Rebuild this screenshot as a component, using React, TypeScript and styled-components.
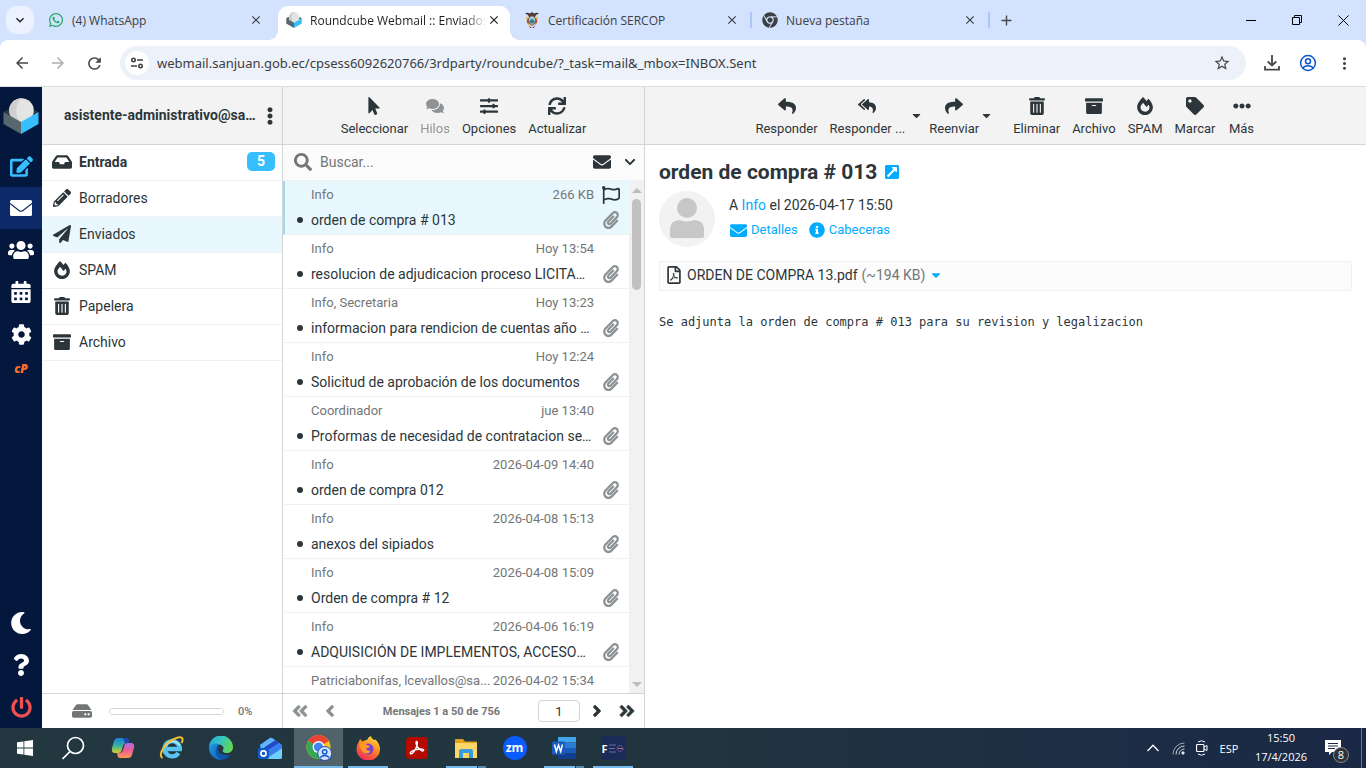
import React from 'react';
import styled, { createGlobalStyle, css } from 'styled-components';
import {
  FaInbox, FaPencilAlt, FaPaperPlane, FaFireAlt, FaTrashAlt, FaArchive, FaMousePointer, FaComments,
  FaSlidersH, FaSync, FaReply, FaReplyAll, FaShare, FaEllipsisH, FaEllipsisV, FaTag, FaRegFlag,
  FaPaperclip, FaEnvelope, FaChevronDown, FaSearch, FaHdd, FaAngleDoubleLeft, FaAngleDoubleRight,
  FaAngleLeft, FaAngleRight, FaExternalLinkSquareAlt, FaInfoCircle, FaRegFilePdf, FaEdit, FaUsers,
  FaCalendarAlt, FaCog, FaMoon, FaQuestion, FaPowerOff, FaWhatsapp, FaChrome, FaCaretDown,
} from 'react-icons/fa';
import {
  MdArrowBack, MdArrowForward, MdRefresh, MdStarBorder, MdMoreVert, MdClose, MdAdd, MdKeyboardArrowDown,
} from 'react-icons/md';

const ink = '#2c363a';
const muted = '#737677';
const link = '#00acff';
const line = '#d0d5d8';

const GlobalStyle = createGlobalStyle`
  * { box-sizing: border-box; }
  body { margin: 0; background: #fff; color: ${ink}; font-family: Roboto, sans-serif; font-size: 14px; }
  button, input { font: inherit; color: inherit; }
  button { border: 0; padding: 0; background: none; cursor: pointer; }
  a { color: inherit; text-decoration: none; }
  ul { list-style: none; margin: 0; padding: 0; }
  h1, p { margin: 0; }
  svg { display: block; flex: none; }
`;

const Screen = styled.div`
  display: flex;
  flex-direction: column;
  height: 100vh;
  overflow: hidden;
`;

/* ---------- Browser chrome ---------- */

const TabStrip = styled.header`
  display: flex;
  align-items: center;
  height: 40px;
  flex: none;
  padding-left: 6px;
  background: #d3e2fd;
  font-family: "Open Sans", sans-serif;
  font-size: 12px;
  color: #3c4043;
`;

const TabSearch = styled.button`
  display: grid;
  place-items: center;
  width: 28px;
  height: 28px;
  margin-right: 6px;
  border-radius: 10px;
  background: #ebf1fe;
  color: #1f1f1f;
`;

const Tab = styled.div<{ $active?: boolean; $divider?: boolean }>`
  position: relative;
  display: flex;
  align-items: center;
  width: 238px;
  height: 40px;
  padding: 0 15px 0 8px;
  ${p => p.$divider && css`
    &::after {
      content: "";
      position: absolute;
      right: 2px;
      top: 12px;
      width: 2px;
      height: 16px;
      background: #a8c7fa;
    }
  `}
  ${p => p.$active && css`
    height: 34px;
    align-self: flex-end;
    padding-bottom: 6px;
    background: #fff;
    border-radius: 10px 10px 0 0;
    color: #1f1f1f;
    width: 232px;
    padding-right: 9px;
    margin-right: 6px;
    &::before, &::after {
      content: "";
      position: absolute;
      bottom: 0;
      width: 10px;
      height: 10px;
    }
    &::before { left: -10px; background: radial-gradient(circle at 0 0, transparent 10px, #fff 10px); }
    &::after { right: -10px; background: radial-gradient(circle at 100% 0, transparent 10px, #fff 10px); }
  `}
`;

const TabTitle = styled.button<{ $fade?: boolean }>`
  display: flex;
  align-items: center;
  gap: 8px;
  flex: 1;
  min-width: 0;
  overflow: hidden;
  white-space: nowrap;
  text-align: left;
  ${p => p.$fade && css`mask-image: linear-gradient(to right, #000 180px, transparent 200px);`}
`;

const IconButton = styled.button<{ $w?: number; $color?: string }>`
  display: grid;
  place-items: center;
  width: ${p => p.$w ?? 36}px;
  height: 34px;
  flex: none;
  color: ${p => p.$color ?? '#474747'};
`;

const WindowControls = styled.div`
  display: flex;
  margin-left: auto;
  color: #000;
`;

const AddressRow = styled.div`
  background: #d3e2fd;
  flex: none;
`;

const AddressBar = styled.div`
  display: flex;
  align-items: center;
  height: 47px;
  padding: 0 4px;
  border-bottom: 1px solid #dcdcdc;
  border-radius: 8px 8px 0 0;
  background: #fff;
`;

const Omnibox = styled.div`
  display: flex;
  align-items: center;
  flex: 1;
  height: 34px;
  margin: 0 8px;
  padding: 0 6px 0 5px;
  border-radius: 17px;
  background: #ecf1fa;
`;

const SiteInfo = styled.button`
  display: grid;
  place-items: center;
  width: 24px;
  height: 24px;
  border-radius: 12px;
  background: #fff;
`;

const UrlInput = styled.input`
  flex: 1;
  min-width: 0;
  padding: 0 8px;
  border: 0;
  outline: 0;
  background: none;
  font-family: "Noto Sans", sans-serif;
  font-size: 13px;
  color: #3a3d41;
`;

/* ---------- Webmail shell ---------- */

const Webmail = styled.div`
  display: flex;
  flex: 1;
  min-height: 0;
`;

const TaskMenu = styled.nav`
  display: flex;
  flex-direction: column;
  width: 42px;
  flex: none;
  background: #04173d;
  color: #fff;
`;

const LogoBox = styled.div`
  display: grid;
  place-items: center;
  height: 58px;
`;

const TaskLink = styled.a<{ $active?: boolean; $color?: string; $push?: boolean }>`
  display: grid;
  place-items: center;
  height: 42px;
  margin-top: ${p => (p.$push ? 'auto' : 0)};
  background: ${p => (p.$active ? '#0f2a68' : 'transparent')};
  color: ${p => p.$color ?? '#fff'};
`;

const PanelLink = styled.a`
  color: #ff6c2c;
  font-family: "Open Sans", sans-serif;
  font-size: 12px;
  font-style: italic;
  font-weight: 800;
  line-height: 28px;
  text-align: center;
`;

const Column = styled.section<{ $w?: number }>`
  display: flex;
  flex-direction: column;
  min-width: 0;
  ${p => (p.$w ? css`width: ${p.$w}px; flex: none; border-right: 1px solid ${line};` : css`flex: 1;`)}
`;

const ColumnHeader = styled.div`
  display: flex;
  align-items: center;
  justify-content: center;
  height: 58px;
  flex: none;
  background: #f3f3f3;
  border-bottom: 1px solid ${line};
`;

const ColumnFooter = styled.footer`
  display: flex;
  align-items: center;
  height: 35px;
  flex: none;
  margin-top: auto;
  padding: 0 2px;
  border-top: 1px solid ${line};
  color: ${muted};
  font-size: 11px;
  font-weight: 500;
`;

const Account = styled.span`
  flex: 1;
  min-width: 0;
  padding: 0 0 2px 22px;
  overflow: hidden;
  white-space: nowrap;
  text-overflow: ellipsis;
  font-weight: 700;
`;

const AccountMenu = styled.button`
  width: 24px;
  display: grid;
  place-items: center;
`;

const Folder = styled.a<{ $selected?: boolean; $unread?: boolean }>`
  display: flex;
  align-items: center;
  gap: 7px;
  height: 36px;
  padding: 0 7px 2px 10px;
  border-bottom: 1px solid #eff2f3;
  background: ${p => (p.$selected ? '#e9f7fe' : '#fff')};
  font-weight: ${p => (p.$unread ? 700 : 400)};
`;

const FolderIcon = styled.span`
  display: grid;
  place-items: center;
  width: 20px;
`;

const Unread = styled.span`
  margin-left: auto;
  width: 28px;
  border-radius: 5px;
  background: #37beff;
  color: #fff;
  line-height: 19px;
  text-align: center;
`;

const QuotaBar = styled.progress`
  appearance: none;
  width: 115px;
  height: 7px;
  margin: 0 14px 0 17px;
  border: 1px solid ${line};
  border-radius: 4px;
  overflow: hidden;
  &::-webkit-progress-bar { background: #fff; }
`;

const QuotaIcon = styled.span`
  margin-left: 28px;
`;

/* ---------- Toolbars ---------- */

const ToolItem = styled.button<{ $disabled?: boolean }>`
  display: flex;
  flex-direction: column;
  align-items: center;
  gap: 4px;
  min-width: 40px;
  padding: 4px 6px 0;
  font-size: 13px;
  line-height: 20px;
  opacity: ${p => (p.$disabled ? 0.5 : 1)};
`;

const ToolCaret = styled.button<{ $tight?: boolean }>`
  display: grid;
  place-items: center;
  width: 14px;
  height: 44px;
  margin-right: ${p => (p.$tight ? 0 : 14)}px;
  margin-left: ${p => (p.$tight ? -2 : -6)}px;
`;

/* ---------- Message list ---------- */

const SearchBar = styled.div`
  display: flex;
  align-items: center;
  height: 36px;
  flex: none;
  padding: 0 0 2px 11px;
  background: #fbfbfb;
  border-bottom: 1px solid #eff2f3;
`;

const SearchInput = styled.input`
  flex: 1;
  min-width: 0;
  padding: 0 8px;
  border: 0;
  outline: 0;
  background: none;
  &::placeholder { color: ${muted}; opacity: 1; }
`;

const ListArea = styled.div`
  display: flex;
  flex: 1;
  min-height: 0;
`;

const MessageList = styled.ul`
  flex: 1;
  min-width: 0;
  overflow: hidden;
`;

const Message = styled.li<{ $selected?: boolean }>`
  display: flex;
  height: 54px;
  padding-right: 8px;
  border-left: 2px solid ${p => (p.$selected ? '#a5d8ef' : 'transparent')};
  border-bottom: 1px solid #eff2f3;
  background: ${p => (p.$selected ? '#e9f7fe' : '#fff')};
`;

const MessageLink = styled.a`
  display: grid;
  grid-template-columns: 26px 1fr auto;
  grid-template-rows: 26px 26px;
  align-items: center;
  flex: 1;
  min-width: 0;
`;

const Sender = styled.span`
  grid-column: 2;
  overflow: hidden;
  white-space: nowrap;
  text-overflow: ellipsis;
  font-size: 13px;
  color: ${muted};
`;

const Stamp = styled.span`
  font-size: 13px;
  color: ${muted};
`;

const Bullet = styled.span`
  justify-self: end;
  width: 6px;
  height: 6px;
  margin-right: 8px;
  border-radius: 3px;
  background: ${ink};
`;

const Subject = styled.span`
  grid-column: 2 / 4;
  overflow: hidden;
  white-space: nowrap;
  text-overflow: ellipsis;
`;

const Marks = styled.span`
  display: grid;
  grid-template-rows: 28px 21px;
  place-items: center;
  width: 20px;
  margin-left: 7px;
`;

const ScrollTrack = styled.div`
  display: flex;
  flex-direction: column;
  align-items: center;
  width: 15px;
  flex: none;
  background: #f1f1f1;
`;

const ScrollArrow = styled.span<{ $down?: boolean }>`
  margin: ${p => (p.$down ? 'auto 0 6px' : '7px 0 6px')};
  border: 5px solid transparent;
  border-${p => (p.$down ? 'top' : 'bottom')}-color: #bcbcbc;
  border-${p => (p.$down ? 'bottom' : 'top')}-width: 0;
`;

const ScrollThumb = styled.span`
  width: 9px;
  height: 91px;
  border-radius: 5px;
  background: #c1c1c1;
`;

const PagerButton = styled.button<{ $dim?: boolean }>`
  display: grid;
  place-items: center;
  width: 30px;
  color: ${p => (p.$dim ? '#8c9294' : ink)};

  svg path {
    stroke: currentColor;
    stroke-width: 20px;
  }
`;

const PagerText = styled.span`
  flex: 1;
  text-align: center;
  font-weight: 700;
`;

const PageInput = styled.input`
  width: 42px;
  height: 22px;
  padding: 0;
  margin-right: 2px;
  border: 1px solid #ced4da;
  border-radius: 4px;
  background: #fff;
  color: ${ink};
  text-align: center;
  font-size: 13px;
  font-weight: 400;
`;

/* ---------- Message view ---------- */

const MessageView = styled.article`
  padding: 14px;
`;

const Title = styled.h1`
  display: flex;
  align-items: center;
  gap: 7px;
  font-size: 21px;
  line-height: 26px;
  font-weight: 700;
`;

const Summary = styled.div`
  display: flex;
  gap: 14px;
  margin-top: 6px;
`;

const SummaryText = styled.div`
  padding-top: 4px;
  line-height: 20px;
`;

const Links = styled.div`
  display: flex;
  gap: 11px;
  margin-top: 5px;
  padding-left: 1px;
  font-size: 13px;
`;

const HeaderLink = styled.a`
  display: flex;
  align-items: center;
  gap: 4px;
  color: ${link};
`;

const Accent = styled.a`
  color: ${link};
`;

const Attachment = styled.div`
  display: flex;
  align-items: center;
  height: 30px;
  margin-top: 14px;
  padding: 0 5px 2px;
  border: 1px solid #f1f1f1;
  background: #fcfcfc;
`;

const AttachmentName = styled.a`
  padding: 0 4px;
`;

const Muted = styled.span`
  color: ${muted};
  margin-right: 4px;
`;

const MailBody = styled.p`
  margin-top: 23px;
  font-family: "DejaVu Sans Mono", monospace;
  font-size: 12px;
  line-height: 16px;
`;

/* ---------- Taskbar ---------- */

const Taskbar = styled.footer`
  display: flex;
  align-items: stretch;
  height: 40px;
  flex: none;
  background: linear-gradient(to right, #22373f 0%, #21353f 50%, #1c2c45 85%, #1a2845 100%);
  color: #fff;
  font-family: "Open Sans", sans-serif;
  font-size: 11px;
`;

const AppButton = styled.button<{ $active?: boolean; $bar?: 'full' | 'one' | 'stack' }>`
  display: grid;
  place-items: center;
  width: 49px;
  background-color: ${p => (p.$active ? '#50626a' : 'transparent')};
  background-repeat: no-repeat;
  background-position: center bottom;
  ${p => p.$bar === 'full' && css`
    background-image: linear-gradient(#76b9ed, #76b9ed);
    background-size: 100% 2px;
  `}
  ${p => p.$bar === 'one' && css`
    background-image: linear-gradient(#76b9ed, #76b9ed);
    background-size: 40px 2px;
  `}
  ${p => p.$bar === 'stack' && css`
    background-image: linear-gradient(to right, #76b9ed 31px, #22373f 31px, #22373f 32px, #5489ad 32px);
    background-size: 40px 2px;
  `}
`;

const Tray = styled.div`
  display: flex;
  align-items: center;
  margin-left: auto;
  padding-right: 4px;
`;

const TrayButton = styled.button<{ $w: number }>`
  display: grid;
  place-items: center;
  width: ${p => p.$w}px;
  height: 40px;
`;

const Clock = styled.time`
  width: 74px;
  padding-bottom: 2px;
  text-align: center;
  line-height: 19px;
`;

const Notice = styled.button`
  position: relative;
  display: grid;
  place-items: center;
  width: 44px;
  height: 40px;
  padding-right: 14px;
  border-right: 1px solid #6b7689;
`;

const NoticeCount = styled.span`
  position: absolute;
  right: 12px;
  bottom: 5px;
  width: 16px;
  height: 16px;
  border: 1px solid #8a8a8a;
  border-radius: 8px;
  background: #303236;
  line-height: 14px;
`;

/* ---------- Drawings ---------- */

const CubeLogo = ({ size }: { size: number }) => (
  <svg width={size} height={size} viewBox="0 0 36 36" aria-hidden="true">
    <path d="M0.500 14 18 5l17.500 9L18 24z" fill="#2c3a3f" />
    <circle cx="18.500" cy="12.500" r="12.300" fill="#e4e4e4" />
    <path d="M18.500 0.200a12.300 12.300 0 0 0 0 24.600c-7-5-7-19 0-24.600z" fill="#cfcfcf" />
    <path d="M0.500 14 18 24v12L0.500 26z" fill="#56686d" />
    <path d="M35.500 14 18 24v12l17.500-10z" fill="#37beff" />
  </svg>
);

const MailNav = () => (
  <svg width="22" height="16" viewBox="0 0 22 16" fill="none" aria-hidden="true">
    <rect width="22" height="16" rx="1.500" fill="#fff" />
    <path d="M0 3.500 9 10.500q2 1.500 4 0l9-7" stroke="#0f2a68" strokeWidth="1.100" />
  </svg>
);

const Crest = () => (
  <svg width="16" height="18" viewBox="0 0 16 18" aria-hidden="true">
    <path d="M1 2.500Q3 1 6 2.500L8 1l2 1.500Q13 1 15 2.500L12 4l-1 2H5L4 4z" fill="#4d3a30" />
    <path d="M2 6h2.500L5 15 3 12.500zM14 6h-2.500L11 15l2-2.500z" fill="#e3b93a" />
    <path d="M3 8l1.500 1v4.500L3 11zM13 8l-1.500 1v4.500L13 11z" fill="#c0443c" />
    <ellipse cx="8" cy="9.500" rx="3.600" ry="4.600" fill="#9fd3ea" stroke="#8a4a30" />
    <path d="M5 10.500 8 7.500l3 3-1 2H6z" fill="#3f7d8c" />
    <path d="M5 14.500 8 17l3-2.500-1 2.500H6z" fill="#aa3a35" />
  </svg>
);

const SiteSettings = () => (
  <svg width="14" height="14" viewBox="0 0 14 14" fill="none" stroke="#3c4043" strokeWidth="1.600" aria-hidden="true">
    <circle cx="3.500" cy="4" r="1.700" />
    <path d="M7 4h6M1 10h6" />
    <circle cx="10.500" cy="10" r="1.700" />
  </svg>
);

const DownloadTray = () => (
  <svg width="16" height="16" viewBox="0 0 16 16" fill="none" stroke="currentColor" strokeWidth="1.800" aria-hidden="true">
    <path d="M8 0v10M3.700 6.500 8 10.500l4.300-4M1 11v3.600h14V11" />
  </svg>
);

const Profile = () => (
  <svg width="18" height="18" viewBox="0 0 18 18" fill="none" stroke="#0b57d0" strokeWidth="1.500" aria-hidden="true">
    <circle cx="9" cy="9" r="7.400" />
    <circle cx="9" cy="7.300" r="2.500" />
    <path d="M3.500 13.800q5.500-4 11 0" />
  </svg>
);

const Minimize = () => (
  <svg width="10" height="10" viewBox="0 0 10 10" stroke="#000" aria-hidden="true"><path d="M0 5.500h10" /></svg>
);

const Restore = () => (
  <svg width="10" height="10" viewBox="0 0 10 10" fill="none" stroke="#000" aria-hidden="true">
    <path d="M.5 2.500h7v7h-7zM2.500 2.500v-2h7v7h-2" />
  </svg>
);

const CloseWindow = () => (
  <svg width="11" height="11" viewBox="0 0 11 11" fill="none" stroke="#000" aria-hidden="true">
    <path d="M.5.5l10 10M10.500.5l-10 10" />
  </svg>
);

const Avatar = () => (
  <svg width="56" height="56" viewBox="0 0 56 56" role="img" aria-label="Info">
    <circle cx="28" cy="28" r="28" fill="#f2f2f2" />
    <circle cx="28" cy="17" r="10" fill="#c7c7c7" />
    <path d="M11 45V39q0-10 10-10 7 3 14 0 10 0 10 10v6q0 2-2 2H13q-2 0-2-2z" fill="#c7c7c7" />
  </svg>
);

const WindowsLogo = () => (
  <svg width="16" height="16" viewBox="0 0 16 16" fill="#fff" aria-hidden="true">
    <path d="M0 2.300 6.500 1.400v6.200H0zM7.300 1.300 16 0v7.600H7.300zM0 8.400h6.500v6.200L0 13.700zM7.300 8.400H16V16l-8.700-1.300z" />
  </svg>
);

const SearchGlass = () => (
  <svg width="24" height="24" viewBox="1 0 24 24" fill="none" stroke="#fff" strokeWidth="1.700" aria-hidden="true">
    <circle cx="14.500" cy="9.500" r="8" />
    <path d="M9 15.500 1.500 23" />
  </svg>
);

const Copilot = () => (
  <svg width="24" height="22" viewBox="0 0 24 22" aria-hidden="true">
    <defs>
      <linearGradient id="cpA" x1="0" y1="0" x2="0" y2="1">
        <stop offset="0" stopColor="#1a7fe0" /><stop offset=".5" stopColor="#35b0a0" /><stop offset="1" stopColor="#d9d02c" />
      </linearGradient>
      <linearGradient id="cpB" x1="0" y1="0" x2="0" y2="1">
        <stop offset="0" stopColor="#b06ae8" /><stop offset=".5" stopColor="#ee5d90" /><stop offset="1" stopColor="#fb9a54" />
      </linearGradient>
    </defs>
    <path d="M7 1h8q2 0 2.500 2L18 6h-3q-2 0-3 3l-1.500 5Q10 16 7 16H4q-4 0-3-5l2-7q1-3 4-3z" fill="url(#cpA)" />
    <path d="M12 1h3q2 0 2.500 2L18.500 6H14z" fill="#1c46b8" />
    <path d="M17 21H9q-2 0-2.500-2L6 16h3q2 0 3-3l1.500-5Q14 6 17 6h3q4 0 3 5l-2 7q-1 3-4 3z" fill="url(#cpB)" />
  </svg>
);

const Explorer = () => (
  <svg width="25" height="24" viewBox="0 0 25 24" fill="none" aria-hidden="true">
    <path d="M19.500 17A7.600 7.600 0 1 1 20.800 13H8" stroke="#58c4f2" strokeWidth="4.400" />
    <path d="M7 10.500Q9 5.500 14 5.500q4.500 0 6.500 4" stroke="#b5ebfc" strokeWidth="1.500" />
    <path d="M3.500 22C-2 19 7 5 17 2.200 23-.5 25 2.500 22.500 7" stroke="#f3c12d" strokeWidth="2" />
  </svg>
);

const Edge = () => (
  <svg width="24" height="24" viewBox="0 0 24 24" aria-hidden="true">
    <defs>
      <linearGradient id="edA" x1="0" y1=".2" x2="1" y2=".5">
        <stop offset="0" stopColor="#2aa5e0" /><stop offset=".5" stopColor="#36c6c0" /><stop offset="1" stopColor="#63d84f" />
      </linearGradient>
      <linearGradient id="edB" x1="0" y1="0" x2="1" y2="1">
        <stop offset="0" stopColor="#1b9de2" /><stop offset="1" stopColor="#1259b5" />
      </linearGradient>
    </defs>
    <path d="M0 12A12 12 0 0 1 24 11c0 4-3 6-6 6-3 0-5-1-4-3 1.500-2 0-5-4-5.500C5 8 1 9.500 0 12z" fill="url(#edA)" />
    <path d="M0 12c1-4 6-5.500 10-3.500C6 10 6 20 14 23.800 6 25 0 19 0 12z" fill="url(#edB)" />
    <path d="M10 9c-3 6 2 12 11.500 9.500-2 3-4.500 4.800-7.500 5.300C5 21 5 12 10 9z" fill="#0f55a8" />
  </svg>
);

const Outlook = () => (
  <svg width="24" height="23" viewBox="0 0 24 23" aria-hidden="true">
    <path d="M2 8 12 1q1-.7 2 0l10 7v12q0 2-2 2H5q-3 0-3-3z" fill="#2f8df0" />
    <path d="M2 8l10-7q1-.7 2 0l4 2.800L4 12z" fill="#5fb4fb" />
    <path d="M4 12 17 3.200l4 2.700L8 14.500z" fill="#2447c8" />
    <path d="M8 14.500 21 6l3 2.200v3L10 20z" fill="#3a7df0" />
    <path d="M24 11.200V20q0 2-2 2H8z" fill="#6fd0fc" />
    <rect y="11" width="11" height="11" rx="2" fill="#1359c8" />
    <circle cx="5.500" cy="16.500" r="2.600" fill="none" stroke="#fff" strokeWidth="1.600" />
  </svg>
);

const ChromeApp = () => (
  <svg width="26" height="26" viewBox="0 0 26 26" aria-hidden="true">
    <circle cx="12.500" cy="12" r="12" fill="#fbc116" />
    <path d="M12.500 12 2.100 6A12 12 0 0 1 22.900 6z" fill="#ea4335" />
    <path d="M12.500 12 2.100 6A12 12 0 0 0 12.500 24l5-9z" fill="#34a853" />
    <circle cx="12.500" cy="12" r="6" fill="#fff" />
    <circle cx="12.500" cy="12" r="4.600" fill="#4285f4" />
    <circle cx="18.700" cy="18.500" r="7" fill="#d3e3fd" stroke="#174ea6" />
    <circle cx="18.700" cy="16.800" r="2.200" fill="none" stroke="#0b57d0" strokeWidth="1.400" />
    <path d="M14.200 22.500q4.500-4 9 0" fill="none" stroke="#0b57d0" strokeWidth="1.400" />
  </svg>
);

const Firefox = () => (
  <svg width="24" height="24" viewBox="0 0 24 24" aria-hidden="true">
    <defs>
      <linearGradient id="ffA" x1=".8" y1="0" x2=".3" y2="1">
        <stop offset="0" stopColor="#ffe14a" /><stop offset=".45" stopColor="#ff8a1f" /><stop offset="1" stopColor="#f0265a" />
      </linearGradient>
    </defs>
    <path d="M3 5.500 4 3l2.500 2.500Q9 3.500 11 4q1-3 4-4 0 2.500 3 4l1.500-.5Q24 8 24 13a11.500 11.500 0 0 1-23.500 0Q.5 9 3 5.500z" fill="url(#ffA)" />
    <circle cx="12" cy="13" r="5.500" fill="#7a3fd0" />
    <path d="M4 8q4-2 7 1l3 1q-1 2-4 2.500 1 3 5 2-2 4-7 2.500Q4 14 4 8z" fill="#ff9a2a" />
  </svg>
);

const Acrobat = () => (
  <svg width="22" height="22" viewBox="0 0 22 22" aria-hidden="true">
    <rect width="22" height="22" rx="4" fill="#b30b00" />
    <path d="M4.500 16.500c-1-1.500 2-3 6-4 4-.8 8-.6 7 1-1.300 1.600-5.500-2-6.800-5C9.500 5.500 10 4 11 4.500c1.200.8-.2 5.500-2 8.500-1.600 2.800-3.700 4.600-4.500 3.500z" fill="none" stroke="#fff" strokeWidth="1.400" />
  </svg>
);

const FolderApp = () => (
  <svg width="22" height="19" viewBox="0 0 22 19" aria-hidden="true">
    <path d="M0 1q0-1 1-1h7l2 2.500h12V6H0z" fill="#e0a21c" />
    <path d="M0 4h22v15H0z" fill="#fcd768" />
    <path d="M4 19v-7q0-2 2-2h10q2 0 2 2v7h-4v-5H8v5z" fill="#3a9bdc" />
  </svg>
);

const ZoomBadge = styled.span`
  display: grid;
  place-items: center;
  width: 24px;
  height: 24px;
  border-radius: 12px;
  background: #0b5cff;
  font-size: 12px;
  line-height: 20px;
  font-weight: 700;
`;

const Word = () => (
  <svg width="24" height="22" viewBox="0 0 24 22" aria-hidden="true">
    <rect x="6" width="18" height="5.500" fill="#41a5ee" />
    <rect x="6" y="5.500" width="18" height="5.500" fill="#2b7cd3" />
    <rect x="6" y="11" width="18" height="5.500" fill="#185abd" />
    <rect x="6" y="16.500" width="18" height="5.500" fill="#103f91" />
    <rect y="4.500" width="13" height="13" rx="1" fill="#185abd" />
    <path d="M2.500 7.500 4.300 14.500 6.500 8l2.200 6.500 1.800-7" fill="none" stroke="#fff" strokeWidth="1.500" />
  </svg>
);

const SignBadge = styled.span`
  display: flex;
  align-items: center;
  justify-content: center;
  gap: 1px;
  width: 24px;
  height: 24px;
  background: #1a2b57;
  font-weight: 700;
`;

const SignMark = () => (
  <svg width="15" height="9" viewBox="0 0 15 9" fill="none" aria-hidden="true">
    <path d="M0 1h7M0 4.500h6M0 8h7" stroke="#6a6fae" />
    <circle cx="11" cy="4.500" r="3" stroke="#8a6a9c" strokeDasharray="2 1" />
    <path d="M9 4.500h5" stroke="#b0708c" />
  </svg>
);

const ChevronUp = () => (
  <svg width="12" height="8" viewBox="0 0 12 8" fill="none" stroke="#fff" strokeWidth="1.300" aria-hidden="true">
    <path d="M.5 7 6 1.300 11.500 7" />
  </svg>
);

const Wifi = () => (
  <svg width="13" height="13" viewBox="0 0 13 13" fill="none" stroke="#d5dae2" aria-hidden="true">
    <path d="M1 12.500A11.500 11.500 0 0 1 12.500 1" opacity=".7" />
    <path d="M4 12.500A8.500 8.500 0 0 1 12.500 4M7 12.500A5.500 5.500 0 0 1 12.500 7" />
    <circle cx="11" cy="11" r="1.200" fill="#fff" />
  </svg>
);

const Camera = () => (
  <svg width="12" height="16" viewBox="0 0 12 16" fill="none" stroke="#fff" aria-hidden="true">
    <rect x=".5" y="4.500" width="7.500" height="7" rx="1" strokeWidth="1.200" />
    <path d="M8 7l3-1.500v5L8 9M2 2q3.500-2.500 7 0M2 14q3.500 2.500 7 0" />
  </svg>
);

const NoticeIcon = () => (
  <svg width="16" height="16" viewBox="0 0 16 16" aria-hidden="true">
    <path d="M0 0h16v12H7l-3 3v-3H0z" fill="#fff" />
    <path d="M3 3.500h10M3 6h10M3 8.500h7" stroke="#1b2944" />
  </svg>
);

/* ---------- Data ---------- */

const folders = [
  { name: 'Entrada', Icon: FaInbox, unread: 5 },
  { name: 'Borradores', Icon: FaPencilAlt },
  { name: 'Enviados', Icon: FaPaperPlane, selected: true },
  { name: 'SPAM', Icon: FaFireAlt },
  { name: 'Papelera', Icon: FaTrashAlt },
  { name: 'Archivo', Icon: FaArchive },
];

const messages = [
  { from: 'Info', date: '266 KB', subject: 'orden de compra # 013', selected: true },
  { from: 'Info', date: 'Hoy 13:54', subject: 'resolucion de adjudicacion proceso LICITACION' },
  { from: 'Info, Secretaria', date: 'Hoy 13:23', subject: 'informacion para rendicion de cuentas año 2025' },
  { from: 'Info', date: 'Hoy 12:24', subject: 'Solicitud de aprobación de los documentos' },
  { from: 'Coordinador', date: 'jue 13:40', subject: 'Proformas de necesidad de contratacion servicios' },
  { from: 'Info', date: '2026-04-09 14:40', subject: 'orden de compra 012' },
  { from: 'Info', date: '2026-04-08 15:13', subject: 'anexos del sipiados' },
  { from: 'Info', date: '2026-04-08 15:09', subject: 'Orden de compra # 12' },
  { from: 'Info', date: '2026-04-06 16:19', subject: 'ADQUISICIÓN DE IMPLEMENTOS, ACCESORIOS' },
  { from: 'Patriciabonifas, lcevallos@sa...', date: '2026-04-02 15:34', subject: '' },
];

const listTools = [
  { label: 'Seleccionar', Icon: FaMousePointer },
  { label: 'Hilos', Icon: FaComments, disabled: true },
  { label: 'Opciones', Icon: FaSlidersH },
  { label: 'Actualizar', Icon: FaSync },
];

const mailTools = [
  { label: 'Eliminar', Icon: FaTrashAlt },
  { label: 'Archivo', Icon: FaArchive },
  { label: 'SPAM', Icon: FaFireAlt },
  { label: 'Marcar', Icon: FaTag },
  { label: 'Más', Icon: FaEllipsisH },
];

const browserTabs = [
  { title: '(4) WhatsApp', icon: <FaWhatsapp size={16} color="#25a766" /> },
  { title: 'Roundcube Webmail :: Enviados', icon: <CubeLogo size={16} />, active: true },
  { title: 'Certificación SERCOP', icon: <Crest />, divider: true },
  { title: 'Nueva pestaña', icon: <FaChrome size={16} />, divider: true },
];

const tasks: { name: string; icon: React.ReactNode; active?: boolean; bar?: 'full' | 'one' | 'stack' }[] = [
  { name: 'Inicio', icon: <WindowsLogo /> },
  { name: 'Buscar', icon: <SearchGlass /> },
  { name: 'Copilot', icon: <Copilot /> },
  { name: 'Internet Explorer', icon: <Explorer /> },
  { name: 'Edge', icon: <Edge /> },
  { name: 'Outlook', icon: <Outlook /> },
  { name: 'Chrome', icon: <ChromeApp />, active: true, bar: 'full' },
  { name: 'Firefox', icon: <Firefox />, bar: 'one' },
  { name: 'Acrobat', icon: <Acrobat /> },
  { name: 'Explorador de archivos', icon: <FolderApp />, bar: 'stack' },
  { name: 'Zoom', icon: <ZoomBadge>zm</ZoomBadge> },
  { name: 'Word', icon: <Word />, bar: 'stack' },
  { name: 'FirmaEC', icon: <SignBadge>F<SignMark /></SignBadge>, bar: 'one' },
];

function Browser() {
  return (
    <>
      <TabStrip>
        <TabSearch aria-label="Buscar pestañas"><MdKeyboardArrowDown size={16} /></TabSearch>
        {browserTabs.map(t => (
          <Tab key={t.title} $active={t.active} $divider={t.divider}>
            <TabTitle $fade={t.active}>{t.icon}{t.title}</TabTitle>
            <button aria-label="Cerrar pestaña"><MdClose size={14} /></button>
          </Tab>
        ))}
        <IconButton $w={28} aria-label="Nueva pestaña"><MdAdd size={17} /></IconButton>
        <WindowControls>
          <IconButton $w={46} aria-label="Minimizar"><Minimize /></IconButton>
          <IconButton $w={46} aria-label="Restaurar"><Restore /></IconButton>
          <IconButton $w={46} aria-label="Cerrar"><CloseWindow /></IconButton>
        </WindowControls>
      </TabStrip>
      <AddressRow>
        <AddressBar>
          <IconButton aria-label="Atrás"><MdArrowBack size={18} /></IconButton>
          <IconButton $color="#adadad" aria-label="Adelante"><MdArrowForward size={18} /></IconButton>
          <IconButton aria-label="Recargar"><MdRefresh size={19} /></IconButton>
          <Omnibox>
            <SiteInfo aria-label="Información del sitio"><SiteSettings /></SiteInfo>
            <UrlInput
              aria-label="Dirección"
              defaultValue="webmail.sanjuan.gob.ec/cpsess6092620766/3rdparty/roundcube/?_task=mail&_mbox=INBOX.Sent"
            />
            <IconButton aria-label="Favoritos"><MdStarBorder size={18} /></IconButton>
          </Omnibox>
          <IconButton aria-label="Descargas"><DownloadTray /></IconButton>
          <IconButton aria-label="Perfil"><Profile /></IconButton>
          <IconButton aria-label="Menú"><MdMoreVert size={19} /></IconButton>
        </AddressBar>
      </AddressRow>
    </>
  );
}

function Sidebar() {
  return (
    <TaskMenu aria-label="Tareas">
      <LogoBox><CubeLogo size={36} /></LogoBox>
      <TaskLink href="#compose" aria-label="Redactar" $color="#37beff"><FaEdit size={23} /></TaskLink>
      <TaskLink href="#mail" aria-label="Correo" $active><MailNav /></TaskLink>
      <TaskLink href="#contacts" aria-label="Contactos"><FaUsers size={26} /></TaskLink>
      <TaskLink href="#calendar" aria-label="Calendario"><FaCalendarAlt size={22} /></TaskLink>
      <TaskLink href="#settings" aria-label="Configuración"><FaCog size={21} /></TaskLink>
      <PanelLink href="#cpanel">cP</PanelLink>
      <TaskLink href="#dark" aria-label="Modo oscuro" $push><FaMoon size={22} /></TaskLink>
      <TaskLink href="#about" aria-label="Acerca de"><FaQuestion size={22} /></TaskLink>
      <TaskLink href="#logout" aria-label="Cerrar sesión" $color="#f2504e"><FaPowerOff size={21} /></TaskLink>
    </TaskMenu>
  );
}

function Folders() {
  return (
    <Column $w={241}>
      <ColumnHeader>
        <Account>asistente-administrativo@sanjuan.gob.ec</Account>
        <AccountMenu aria-label="Opciones"><FaEllipsisV size={18} /></AccountMenu>
      </ColumnHeader>
      <ul>
        {folders.map(({ name, Icon, unread, selected }) => (
          <li key={name}>
            <Folder href={'#' + name} $selected={selected} $unread={!!unread}>
              <FolderIcon><Icon size={name === 'Entrada' ? 20 : 18} /></FolderIcon>
              {name}
              {unread && <Unread>{unread}</Unread>}
            </Folder>
          </li>
        ))}
      </ul>
      <ColumnFooter>
        <QuotaIcon><FaHdd size={20} /></QuotaIcon>
        <QuotaBar aria-label="Cuota" value={0} max={100} />
        0%
      </ColumnFooter>
    </Column>
  );
}

function Messages() {
  return (
    <Column $w={362}>
      <ColumnHeader>
        {listTools.map(({ label, Icon, disabled }) => (
          <ToolItem key={label} $disabled={disabled}><Icon size={18} />{label}</ToolItem>
        ))}
      </ColumnHeader>
      <SearchBar>
        <FaSearch size={18} color={muted} />
        <SearchInput aria-label="Buscar" placeholder="Buscar..." />
        <IconButton aria-label="No leídos" $w={28} $color={ink}><FaEnvelope size={18} /></IconButton>
        <IconButton aria-label="Opciones de búsqueda" $w={28} $color={ink}><FaChevronDown size={12} /></IconButton>
      </SearchBar>
      <ListArea>
        <MessageList>
          {messages.map(m => (
            <Message key={m.date + m.from} $selected={m.selected}>
              <MessageLink href="#message">
                <Sender>{m.from}</Sender>
                <Stamp>{m.date}</Stamp>
                <Bullet />
                <Subject>{m.subject}</Subject>
              </MessageLink>
              <Marks>
                {m.selected ? <FaRegFlag size={18} /> : <span />}
                <FaPaperclip size={18} color="#8c9294" />
              </Marks>
            </Message>
          ))}
        </MessageList>
        <ScrollTrack>
          <ScrollArrow />
          <ScrollThumb />
          <ScrollArrow $down />
        </ScrollTrack>
      </ListArea>
      <ColumnFooter>
        <PagerButton $dim aria-label="Primera página"><FaAngleDoubleLeft size={18} /></PagerButton>
        <PagerButton $dim aria-label="Página anterior"><FaAngleLeft size={18} /></PagerButton>
        <PagerText>Mensajes 1 a 50 de 756</PagerText>
        <PageInput aria-label="Página" defaultValue="1" />
        <PagerButton aria-label="Página siguiente"><FaAngleRight size={18} /></PagerButton>
        <PagerButton aria-label="Última página"><FaAngleDoubleRight size={18} /></PagerButton>
      </ColumnFooter>
    </Column>
  );
}

function Reader() {
  return (
    <Column as="main">
      <ColumnHeader>
        <ToolItem><FaReply size={18} />Responder</ToolItem>
        <ToolItem><FaReplyAll size={18} />Responder ...</ToolItem>
        <ToolCaret $tight aria-label="Opciones de respuesta"><FaCaretDown size={13} /></ToolCaret>
        <ToolItem><FaShare size={18} />Reenviar</ToolItem>
        <ToolCaret aria-label="Opciones de reenvío"><FaCaretDown size={13} /></ToolCaret>
        {mailTools.map(({ label, Icon }) => (
          <ToolItem key={label}><Icon size={18} />{label}</ToolItem>
        ))}
      </ColumnHeader>
      <MessageView>
        <Title>
          orden de compra # 013
          <Accent href="#open" aria-label="Abrir en otra ventana"><FaExternalLinkSquareAlt size={16} /></Accent>
        </Title>
        <Summary>
          <Avatar />
          <SummaryText>
            <p>A <Accent href="#info">Info</Accent> el 2026-04-17 15:50</p>
            <Links>
              <HeaderLink href="#details"><FaEnvelope size={17} />Detalles</HeaderLink>
              <HeaderLink href="#headers"><FaInfoCircle size={16} />Cabeceras</HeaderLink>
            </Links>
          </SummaryText>
        </Summary>
        <Attachment>
          <FaRegFilePdf size={18} />
          <AttachmentName href="#attachment">ORDEN DE COMPRA 13.pdf</AttachmentName>
          <Muted>(~194 KB)</Muted>
          <Accent as="button" aria-label="Opciones del adjunto"><FaCaretDown size={14} /></Accent>
        </Attachment>
        <MailBody>Se adjunta la orden de compra # 013 para su revision y legalizacion</MailBody>
      </MessageView>
    </Column>
  );
}

export default function App() {
  return (
    <Screen>
      <GlobalStyle />
      <Browser />
      <Webmail>
        <Sidebar />
        <Folders />
        <Messages />
        <Reader />
      </Webmail>
      <Taskbar>
        {tasks.map(t => (
          <AppButton key={t.name} aria-label={t.name} $active={t.active} $bar={t.bar}>{t.icon}</AppButton>
        ))}
        <Tray>
          <TrayButton $w={26} aria-label="Iconos ocultos"><ChevronUp /></TrayButton>
          <TrayButton $w={24} aria-label="Red"><Wifi /></TrayButton>
          <TrayButton $w={24} aria-label="Cámara"><Camera /></TrayButton>
          <TrayButton $w={30}>ESP</TrayButton>
          <Clock>15:50<br />17/4/2026</Clock>
          <Notice aria-label="Notificaciones"><NoticeIcon /><NoticeCount>8</NoticeCount></Notice>
        </Tray>
      </Taskbar>
    </Screen>
  );
}
